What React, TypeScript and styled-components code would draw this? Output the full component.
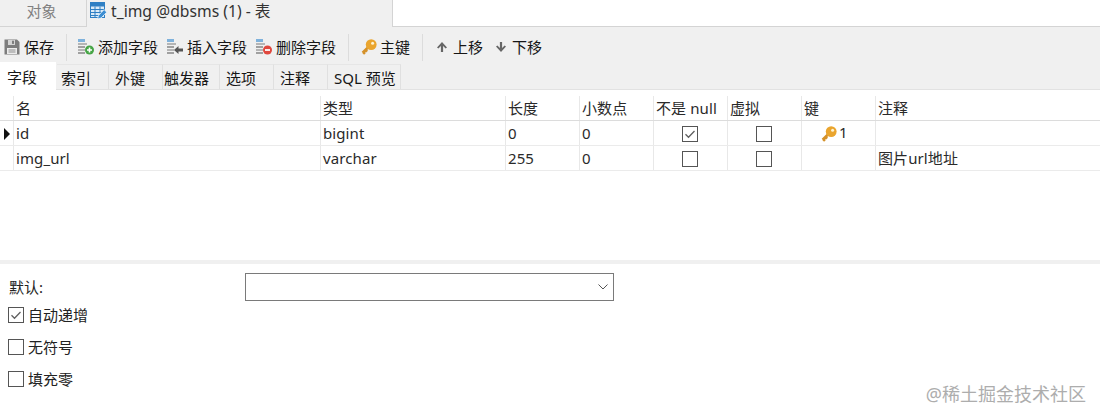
import React from "react";
import styled, { createGlobalStyle } from "styled-components";

const FONT = `"Noto Sans", "Noto Sans CJK SC", sans-serif`;

const Global = createGlobalStyle`
  html, body { margin: 0; padding: 0; background: #fff; }
  body { font-family: ${FONT}; font-size: 15px; color: #1c1c1c; }
`;

const Page = styled.div`
  position: relative;
  width: 1100px;
  height: 419px;
  overflow: hidden;
  background: #fff;
  display: flex;
  flex-direction: column;
`;

const TabBar = styled.div`
  height: 27px;
  box-sizing: border-box;
  display: flex;
  background: #fff;
  border-bottom: 1px solid #d4d4d4;
`;

const DocTab = styled.div<{ $active?: boolean }>`
  box-sizing: border-box;
  height: 26px;
  background: #f0f0f0;
  display: flex;
  align-items: center;
  line-height: 22px;
  font-size: 15px;
  ${(p) =>
    p.$active
      ? `width: 307px; padding: 0 0 5px 3px; gap: 4px; color: #333; font-size: 15.7px; border-left: 1px solid #d4d4d4; border-right: 1px solid #d4d4d4; margin-bottom: -1px; height: 27px;`
      : `width: 86px; justify-content: center; color: #808080; padding: 0 3px 4px 0;`}
`;

const Toolbar = styled.div`
  height: 37px;
  box-sizing: border-box;
  padding: 3px 0 0 4px;
  background: #f0f0f0;
  display: flex;
  align-items: center;
`;

const ToolButton = styled.div<{ $iconGap?: number; $after?: number }>`
  display: flex;
  align-items: center;
  gap: ${(p) => p.$iconGap ?? 4}px;
  margin-right: ${(p) => p.$after ?? 9}px;
  line-height: 20px;
  font-size: 15px;
  color: #161616;
  white-space: nowrap;
  svg { flex: none; }
`;

const ToolSep = styled.div<{ $after?: number }>`
  width: 1px;
  height: 27px;
  background: #dcdcdc;
  margin-right: ${(p) => p.$after ?? 11}px;
`;

const SubTabs = styled.div`
  height: 26px;
  background: #f0f0f0;
  display: flex;
  align-items: stretch;
  box-sizing: border-box;
  border-bottom: 1px solid #e2e2e2;
`;

const SubTab = styled.div<{ $active?: boolean; $w: number; $pad?: number }>`
  box-sizing: border-box;
  width: ${(p) => p.$w}px;
  font-size: 15px;
  color: #161616;
  white-space: nowrap;
  ${(p) =>
    p.$active
      ? `background: #fff; margin-top: -2px; height: 28px; padding-left: 7px; margin-right: 1px; line-height: 31px;`
      : `padding-left: ${p.$pad ?? 6}px; border-right: 1px solid #e0e0e0; border-top: 1px solid #e6e6e6; line-height: 26px;`}
`;

const Table = styled.div`
  padding-top: 6px;
  height: 170px;
  box-sizing: border-box;
  background: #fff;
`;

const Row = styled.div<{ $header?: boolean }>`
  display: grid;
  grid-template-columns: 14px 307px 185px 74px 74px 74px 74px 74px 1fr;
  height: 25px;
  box-sizing: border-box;
  border-bottom: 1px solid ${(p) => (p.$header ? "#dcdcdc" : "#ebebeb")};
`;

const Cell = styled.div<{ $center?: boolean }>`
  box-sizing: border-box;
  border-right: 1px solid #e8e8e8;
  padding: 1px 0 0 2px;
  font-size: 15px;
  line-height: 23px;
  color: #2a2a2a;
  white-space: nowrap;
  display: flex;
  align-items: center;
  letter-spacing: 0.1px;
  ${(p) => (p.$center ? `justify-content: center; padding: 1px 2px 0 0;` : "")}
  &:last-child { border-right: none; }
`;

const Indicator = styled(Cell)`
  padding-left: 4px;
`;

const KeyCell = styled(Cell)`
  padding-left: 19px;
  gap: 2px;
`;

const KeyIndex = styled.span`
  margin-top: -3px;
`;

const Box = styled.span<{ $checked?: boolean }>`
  box-sizing: border-box;
  width: 16px;
  height: 16px;
  flex: none;
  border: 1px solid #555;
  background: #fff;
  display: inline-flex;
  align-items: center;
  justify-content: center;
`;

const Splitter = styled.div`
  height: 4px;
  background: #f0f0f0;
`;

const Options = styled.div`
  padding: 9px 0 0 8px;
  display: flex;
  flex-direction: column;
`;

const DefaultRow = styled.div`
  display: flex;
  align-items: center;
  height: 28px;
  margin-bottom: 6px;
`;

const DefaultLabel = styled.div`
  width: 237px;
  padding-left: 1px;
  box-sizing: border-box;
  font-size: 15px;
  color: #222;
  line-height: 28px;
`;

const Select = styled.div`
  box-sizing: border-box;
  width: 369px;
  height: 28px;
  border: 1px solid #7a7a7a;
  background: #fff;
  display: flex;
  align-items: center;
  justify-content: flex-end;
  padding-right: 4px;
`;

const OptionRow = styled.label`
  display: flex;
  align-items: center;
  gap: 4px;
  height: 16px;
  margin-bottom: 16px;
  font-size: 15px;
  line-height: 16px;
  color: #222;
`;

const Watermark = styled.div`
  position: absolute;
  right: 14px;
  top: 382px;
  font-size: 18px;
  line-height: 24px;
  color: #adadad;
  white-space: nowrap;
`;

const Check = () => (
  <svg width="14" height="14" viewBox="0 0 14 14">
    <path d="M2.5 7.2 L5.5 10.2 L11.5 4" fill="none" stroke="#606060" strokeWidth="1.3" />
  </svg>
);

const TableEditIcon = () => (
  <svg width="17" height="18" viewBox="0 0 17 18">
    <rect x="0.5" y="0.5" width="14" height="15" fill="#dcebf7" stroke="#2f7fc4" />
    <rect x="0" y="0" width="15" height="4.5" fill="#2f7fc4" />
    <path d="M1 7.5h13M1 10.5h13M1 13.5h8M5 4.5v11M10 4.5v7" stroke="#2f7fc4" strokeWidth="1" fill="none" />
    <path d="M7.5 17l1-3.6 5.6-5.8 2.6 2.6-5.6 5.8z" fill="#3d8ed2" stroke="#fff" strokeWidth="0.7" />
  </svg>
);

const SaveIcon = () => (
  <svg width="16" height="16" viewBox="0 0 16 16">
    <path d="M0.5 0.5h12.5l2.5 2.5v12.5h-15z" fill="#7d7d7d" />
    <rect x="4" y="1" width="7" height="5" fill="#d4d4d4" />
    <rect x="8" y="1.7" width="2" height="3.2" fill="#7d7d7d" />
    <rect x="3" y="9" width="10" height="6" fill="#ececec" />
    <path d="M4.5 11h7M4.5 13h7" stroke="#8f8f8f" />
  </svg>
);

const Bars = () => (
  <>
    <rect x="0" y="0" width="7" height="3" fill="#7fb2dc" />
    <rect x="0" y="4" width="9" height="2" fill="#b5b5b5" />
    <rect x="0" y="7" width="7" height="2" fill="#a0a0a0" />
    <rect x="0" y="10" width="7" height="2" fill="#b5b5b5" />
    <rect x="0" y="13" width="7" height="2" fill="#a0a0a0" />
  </>
);

const AddFieldIcon = () => (
  <svg width="16" height="16" viewBox="0 0 16 16">
    <Bars />
    <circle cx="11.5" cy="11" r="4.5" fill="#46a546" />
    <path d="M9 11h5M11.5 8.5v5" stroke="#fff" strokeWidth="1.6" />
  </svg>
);

const InsertFieldIcon = () => (
  <svg width="16" height="16" viewBox="0 0 16 16">
    <Bars />
    <path d="M16 9.5h-4.5V7L7 11l4.5 4v-2.5H16z" fill="#555" />
  </svg>
);

const DeleteFieldIcon = () => (
  <svg width="16" height="16" viewBox="0 0 16 16">
    <Bars />
    <circle cx="11.5" cy="11" r="4.5" fill="#e0483e" />
    <path d="M9 11h5" stroke="#fff" strokeWidth="1.8" />
  </svg>
);

const KeyIcon = () => (
  <svg width="16" height="16" viewBox="0 0 16 16">
    <path d="M7.5 8L1.6 13.6M2.2 13l1.8 1.8M4.4 11l1.7 1.7" stroke="#d4912a" strokeWidth="2.6" fill="none" />
    <circle cx="10.2" cy="5.6" r="5.4" fill="#eaa52e" />
    <circle cx="11.6" cy="4.2" r="1.5" fill="#fff3d2" />
  </svg>
);

const ArrowUp = () => (
  <svg width="12" height="12" viewBox="0 0 12 12">
    <path d="M6 1L11 6.5L9.6 7.6L7.1 5V11H4.9V5L2.4 7.6L1 6.5z" fill="#666" />
  </svg>
);

const ArrowDown = () => (
  <svg width="12" height="12" viewBox="0 0 12 12">
    <path d="M6 11L1 5.5L2.4 4.4L4.9 7V1H7.1V7L9.6 4.4L11 5.5z" fill="#666" />
  </svg>
);

const RowPointer = () => (
  <svg width="6" height="12" viewBox="0 0 6 12">
    <path d="M0 0L6 6L0 12z" fill="#111" />
  </svg>
);

const Chevron = () => (
  <svg width="12" height="8" viewBox="0 0 12 8">
    <path d="M1.5 1.5L6 6L10.5 1.5" fill="none" stroke="#555" strokeWidth="1" />
  </svg>
);

const subTabs: [string, number, number][] = [
  ["索引", 52, 4],
  ["外键", 54, 6],
  ["触发器", 57, 1],
  ["选项", 54, 6],
  ["注释", 54, 6],
  ["SQL 预览", 73, 6],
];

export default function App() {
  return (
    <Page>
      <Global />
      <TabBar>
        <DocTab>对象</DocTab>
        <DocTab $active>
          <TableEditIcon />
          <span>t_img @dbsms (1) - 表</span>
        </DocTab>
      </TabBar>
      <Toolbar>
        <ToolButton $iconGap={4} $after={12}><SaveIcon />保存</ToolButton>
        <ToolSep />
        <ToolButton $iconGap={4}><AddFieldIcon />添加字段</ToolButton>
        <ToolButton $iconGap={4}><InsertFieldIcon />插入字段</ToolButton>
        <ToolButton $iconGap={4} $after={12}><DeleteFieldIcon />删除字段</ToolButton>
        <ToolSep $after={12} />
        <ToolButton $iconGap={3} $after={12}><KeyIcon />主键</ToolButton>
        <ToolSep $after={13} />
        <ToolButton $iconGap={5} $after={12}><ArrowUp />上移</ToolButton>
        <ToolButton $iconGap={5}><ArrowDown />下移</ToolButton>
      </Toolbar>
      <SubTabs>
        <SubTab $active $w={56}>字段</SubTab>
        {subTabs.map(([label, w, pad]) => (
          <SubTab key={label} $w={w} $pad={pad}>{label}</SubTab>
        ))}
      </SubTabs>
      <Table>
        <Row $header>
          <Cell />
          <Cell>名</Cell>
          <Cell>类型</Cell>
          <Cell>长度</Cell>
          <Cell>小数点</Cell>
          <Cell>不是 null</Cell>
          <Cell>虚拟</Cell>
          <Cell>键</Cell>
          <Cell>注释</Cell>
        </Row>
        <Row>
          <Indicator><RowPointer /></Indicator>
          <Cell>id</Cell>
          <Cell>bigint</Cell>
          <Cell>0</Cell>
          <Cell>0</Cell>
          <Cell $center><Box $checked><Check /></Box></Cell>
          <Cell $center><Box /></Cell>
          <KeyCell><KeyIcon /><KeyIndex>1</KeyIndex></KeyCell>
          <Cell />
        </Row>
        <Row>
          <Cell />
          <Cell>img_url</Cell>
          <Cell>varchar</Cell>
          <Cell>255</Cell>
          <Cell>0</Cell>
          <Cell $center><Box /></Cell>
          <Cell $center><Box /></Cell>
          <Cell />
          <Cell>图片url地址</Cell>
        </Row>
      </Table>
      <Splitter />
      <Options>
        <DefaultRow>
          <DefaultLabel>默认:</DefaultLabel>
          <Select><Chevron /></Select>
        </DefaultRow>
        <OptionRow><Box $checked><Check /></Box>自动递增</OptionRow>
        <OptionRow><Box />无符号</OptionRow>
        <OptionRow><Box />填充零</OptionRow>
      </Options>
      <Watermark>@稀土掘金技术社区</Watermark>
    </Page>
  );
}
